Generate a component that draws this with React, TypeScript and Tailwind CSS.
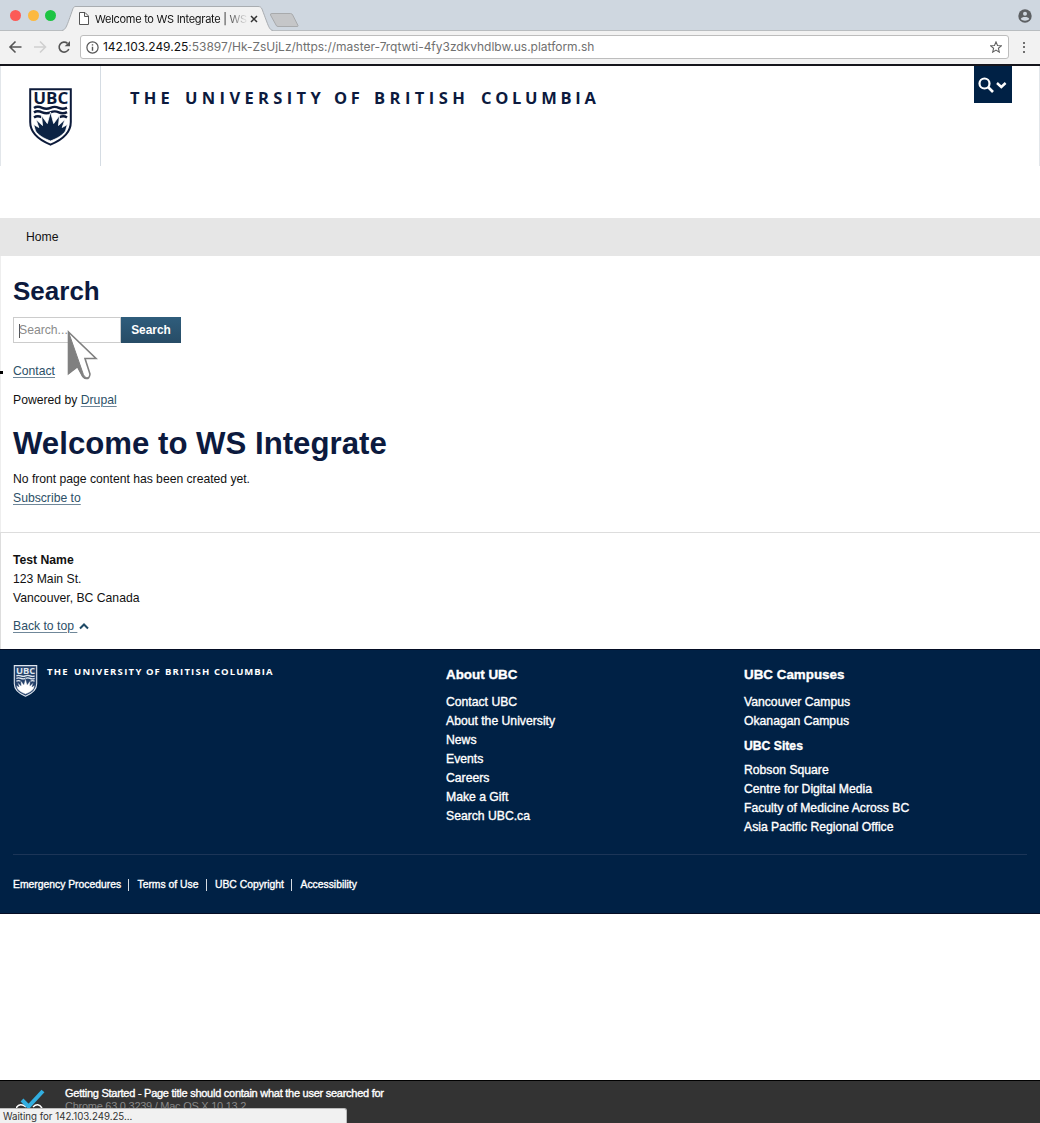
import React from "react";

function Crest({ className, line, fill, rays }: { className: string; line: string; fill: string; rays: string }) {
  return (
    <svg className={className} viewBox="0 0 43 58" fill="none">
      <path d="M1.200 1.200H41.800V34C41.800 45 34 51.500 21.500 56.600C9 51.500 1.200 45 1.200 34Z" fill={fill} stroke={line} strokeWidth="2" />
      <text x="4.200" y="15.800" fontFamily="'Open Sans', sans-serif" fontWeight="700" fontSize="16.500" textLength="35" lengthAdjust="spacingAndGlyphs" fill={line}>
        UBC
      </text>
      <g stroke={line} strokeWidth="2.400">
        <path d="M5 20c3-2.200 5-1.600 8.200-.2s5.200 1.400 8.300 0s5.300-1.400 8.300 0s5.200 1.400 8.200-.2" />
        <path d="M5 24.500c3-2.200 5-1.600 8.200-.2s5.200 1.400 8.300 0s5.300-1.400 8.300 0s5.200 1.400 8.200-.2" />
        <path d="M5 29.500c2.500-1.700 4.500-1.600 7.500-.4M30.500 29.100c3-1.200 5-1.300 7.500.4" />
      </g>
      <path
        d="M6.500 43L4.600 36.500L9.800 39.500L7 31.500L13.500 37.500L12.500 27.500L18.300 35.500L21.500 24L24.700 35.500L30.500 27.500L29.500 37.500L36 31.500L33.200 39.500L38.400 36.500L36.500 43C33.500 47.500 28 50.500 21.500 53C15 50.500 9.500 47.500 6.500 43Z"
        fill={rays}
        stroke={fill}
        strokeWidth=".8"
      />
    </svg>
  );
}

function BrowserChrome() {
  return (
    <header className="h-[66px] border-b-2 border-[#15151c] bg-[#f2f2f2] font-[Inter,sans-serif]">
      <div className="relative flex h-[31px] border-b border-[#b9bdc0] bg-[#cfd7e0]">
        <svg className="absolute left-0 top-0 h-[32px] w-[310px]" viewBox="0 0 310 32" fill="none">
          <path d="M62 31C66 29.500 66.500 27 73 8.500C74 6.700 74.500 6.500 76 6.500H258C260 6.500 261 7 262 9C269 27.500 269 29.500 273 31V32H62Z" fill="#f2f2f2" />
          <path d="M62 30.500C66 29.500 66.500 27 73 8.500C74 6.700 74.500 6.500 76 6.500H258C260 6.500 261 7 262 9C269 27.500 269 29.500 273 30.500" stroke="#a9adb1" />
          <path d="M272 13.500H290.500Q292 13.500 292.700 15L298 25.500Q298.300 26.500 297 26.500H278Q276.500 26.500 276 25L270.500 15Q270 13.500 272 13.500Z" fill="#c5c6c8" stroke="#a8aaac" />
        </svg>
        <div className="relative flex h-[31px] w-full items-center">
          <i className="ml-[10px] size-[11px] rounded-full bg-[#fc5b57]" />
          <i className="ml-[6.500px] size-[11px] rounded-full bg-[#fcb93f]" />
          <i className="ml-[6.500px] size-[11px] rounded-full bg-[#1dc443]" />
          <svg className="ml-[23px] mt-[6px] h-[13px] w-[10px] shrink-0" viewBox="0 0 10 13" fill="#fff" stroke="#555" strokeWidth="1">
            <path d="M.5.500H6L9.500 4V12.500H.500ZM5.500.500V4.500H9.500" />
          </svg>
          <p className="ml-[6px] mt-[7px] w-[153px] whitespace-nowrap bg-[linear-gradient(90deg,#111_84%,#d8d8d8_98%)] bg-clip-text text-[11px] leading-[16px] tracking-[-0.28px] text-transparent">
            Welcome to WS Integrate | WS
          </p>
          <svg className="ml-[2px] mt-[7px] size-[8px] shrink-0" viewBox="0 0 8 8" stroke="#333" strokeWidth="1.500">
            <path d="M1 1L7 7M7 1L1 7" />
          </svg>
          <svg className="ml-auto mr-[8px] size-[14px]" viewBox="0 0 14 14">
            <circle cx="7" cy="7" r="6.700" fill="#5d6063" />
            <circle cx="7" cy="4.700" r="2" fill="#cfd7e0" />
            <path d="M2.800 10C3.500 7.400 10.500 7.400 11.200 10C9.500 12.200 4.500 12.200 2.800 10Z" fill="#cfd7e0" />
          </svg>
        </div>
      </div>
      <div className="flex h-[32px] items-center">
        <svg className="ml-[8px] h-[14px] w-[64px] shrink-0" viewBox="0 0 64 14" fill="none" strokeWidth="1.600">
          <path d="M13.500 7H2M7.500 1.500L2 7L7.500 12.500" stroke="#555" />
          <path d="M26 7H37.500M32 1.500L37.500 7L32 12.500" stroke="#d0d0d0" />
          <path d="M60.800 9A5 5 0 1 1 59.500 3.400" stroke="#555" />
          <path d="M62 1V6.300H56.700Z" fill="#555" />
        </svg>
        <div className="ml-[8px] flex h-[24px] w-[929px] items-center rounded-[3px] border border-[#bdbdbd] bg-white">
          <svg className="ml-[5px] size-[13px] shrink-0" viewBox="0 0 13 13" fill="none" stroke="#555" strokeWidth="1.200">
            <circle cx="6.500" cy="6.500" r="5.600" />
            <path d="M6.500 5.700V9.700M6.500 3.200V4.600" strokeWidth="1.400" />
          </svg>
          <p className="ml-[4px] whitespace-nowrap text-[12px] leading-[16px] tracking-[-0.018px] text-[#707070]">
            <span className="text-[#111]">142.103.249.25</span>:53897/Hk-ZsUjLz/https://master-7rqtwti-4fy3zdkvhdlbw.us.platform.sh
          </p>
          <svg className="ml-auto mr-[6px] size-[12px]" viewBox="0 0 12 12" fill="none" stroke="#606060" strokeWidth="1.100">
            <path d="M6 .9L7.500 4.500L11.300 4.800L8.400 7.300L9.300 11.100L6 9.100L2.700 11.100L3.600 7.300L.7 4.800L4.500 4.500Z" />
          </svg>
        </div>
        <div className="ml-[14px] flex flex-col gap-[2.500px]">
          <i className="size-[2px] rounded-full bg-[#444]" />
          <i className="size-[2px] rounded-full bg-[#444]" />
          <i className="size-[2px] rounded-full bg-[#444]" />
        </div>
      </div>
    </header>
  );
}

const linkStyle = "text-[#2d5067] underline decoration-[#6f8799] decoration-1 underline-offset-2";

function FooterLinks({ items }: { items: string[] }) {
  return (
    <ul>
      {items.map((t) => (
        <li key={t} className="h-[19px] whitespace-nowrap leading-[19px]">{t}</li>
      ))}
    </ul>
  );
}

export default function App() {
  return (
    <div className="flex h-[1123px] w-[1040px] flex-col overflow-hidden bg-white font-['Liberation_Sans',Arial,sans-serif] text-[12.2px] leading-[19px] text-[#111]">
      <BrowserChrome />
      <div className="flex h-[100px] border-x border-[#e2e6ea]">
        <div className="w-[100px] border-r border-[#d5dce3] pl-[28px] pt-[22px]">
          <Crest className="h-[58px] w-[43px]" line="#0c1a3a" fill="#fff" rays="#0c2344" />
        </div>
        <div className="flex pl-[29px] pt-[21px] font-['Open_Sans',sans-serif] text-[16.5px] font-bold leading-[22px] text-[#0c1a3e]">
          <span className="w-[55px] tracking-[4.100px]">THE</span>
          <span className="w-[149px] tracking-[4.350px]">UNIVERSITY</span>
          <span className="w-[40px] tracking-[3.500px]">OF</span>
          <span className="w-[107px] tracking-[4.450px]">BRITISH</span>
          <span className="tracking-[3.700px]">COLUMBIA</span>
        </div>
        <div className="ml-auto mr-[27px] flex h-[37px] w-[38px] items-center bg-[#002145] pl-[4px]">
          <svg className="h-[16px] w-[29px]" viewBox="0 0 29 16" fill="none" stroke="#fff" strokeWidth="2.200">
            <circle cx="6.500" cy="6.500" r="5" />
            <path d="M10 10L15 15" strokeWidth="2.600" />
            <path d="M19 6L23.300 10L27.600 6" strokeWidth="2.400" />
          </svg>
        </div>
      </div>
      <nav className="mt-[52px] flex h-[38px] items-center bg-[#e6e6e6] pl-[26px]">Home</nav>
      <main className="relative h-[276px] border-l border-[#eee] pl-[12px]">
        <h2 className="pt-[19px] text-[26px] font-bold leading-[32px] text-[#0c1a3e]">Search</h2>
        <div className="mt-[10px] flex h-[26px]">
          <div className="flex w-[108px] items-center border border-[#ccc] pl-[5px] pt-px text-[#8b8b8b]">
            <i className="-mr-px h-[14px] w-px bg-[#555]" />Search...
          </div>
          <button className="w-[60px] bg-gradient-to-b from-[#2f5d7c] to-[#274c66] text-[11.900px] font-bold text-white">Search</button>
        </div>
        <i className="absolute -left-px top-[115px] h-[3px] w-[3px] bg-black" />
        <p className="mt-[19px]"><a className={linkStyle}>Contact</a></p>
        <p className="mt-[10px]">Powered by <a className={linkStyle}>Drupal</a></p>
        <h1 className="mt-[14px] text-[31.200px] font-bold leading-[40px] text-[#0c1a3e]">Welcome to WS Integrate</h1>
        <p className="mt-[6px] tracking-[-0.02px]">No front page content has been created yet.</p>
        <p><a className={linkStyle}>Subscribe to</a></p>
        <svg className="absolute left-[66px] top-[74px] h-[52px] w-[34px]" viewBox="0 0 34 52">
          <path d="M1.500 2L29 28.500L18 28.500L23 44Q22.500 49 19 48.500Q16 48 14.500 44L10.500 36.500L1.500 43.500Z" fill="#fff" stroke="#808080" strokeWidth="1.600" />
          <path d="M1.500 2L15.500 42Q17 48 21 48Q16.500 50 14.500 44L10.500 36.500L1.500 43.500Z" fill="#808080" stroke="#808080" />
        </svg>
      </main>
      <section className="h-[117px] border-l border-t border-[#ddd] pl-[12px] pt-[18px]">
        <p className="font-bold">Test Name</p>
        <p>123 Main St.</p>
        <p>Vancouver, BC Canada</p>
        <p className="mt-[9px] flex items-center">
          <a className={`${linkStyle} whitespace-pre`}>{"Back to top "}</a>
          <svg className="ml-[2px] h-[7px] w-[10px]" viewBox="0 0 10 7" fill="none" stroke="#1f4a66" strokeWidth="2"><path d="M1 5.500L5 1.500L9 5.500" /></svg>
        </p>
      </section>
      <footer className="h-[265px] border-y border-[#050d24] bg-[#002145] px-[13px] text-white [-webkit-text-stroke:0.350px_white]">
        <div className="flex h-[205px] border-b border-[#1c3557]">
          <div className="flex w-[433px] pt-[15px]">
            <Crest className="h-[32px] w-[25px]" line="#dfe6ee" fill="#24416a" rays="#fff" />
            <div className="flex pl-[9px] font-['Open_Sans',sans-serif] text-[9.500px] font-bold leading-[13px] [-webkit-text-stroke:0px]">
              <span className="w-[27px] tracking-[1.200px]">THE</span>
              <span className="w-[72px] tracking-[1.300px]">UNIVERSITY</span>
              <span className="w-[19px] tracking-[1px]">OF</span>
              <span className="w-[49px] tracking-[1.200px]">BRITISH</span>
              <span className="tracking-[1.050px]">COLUMBIA</span>
            </div>
          </div>
          <div className="w-[298px] pt-[15px]">
            <h3 className="mb-[9px] text-[13.400px] font-bold">About UBC</h3>
            <FooterLinks items={["Contact UBC", "About the University", "News", "Events", "Careers", "Make a Gift", "Search UBC.ca"]} />
          </div>
          <div className="pt-[15px]">
            <h3 className="mb-[9px] text-[13.400px] font-bold">UBC Campuses</h3>
            <FooterLinks items={["Vancouver Campus", "Okanagan Campus"]} />
            <h4 className="mb-[5px] mt-[6px] font-bold">UBC Sites</h4>
            <FooterLinks items={["Robson Square", "Centre for Digital Media", "Faculty of Medicine Across BC", "Asia Pacific Regional Office"]} />
          </div>
        </div>
        <div className="flex items-center whitespace-nowrap pt-[20px] text-[10.350px]">
          <span className="w-[115px]">Emergency Procedures</span>
          <i className="mr-[8.500px] h-[12px] w-px bg-[#d5dbe2]" />
          <span className="w-[68px]">Terms of Use</span>
          <i className="mr-[8.500px] h-[12px] w-px bg-[#d5dbe2]" />
          <span className="w-[76px]">UBC Copyright</span>
          <i className="mr-[8.500px] h-[12px] w-px bg-[#d5dbe2]" />
          <span>Accessibility</span>
        </div>
      </footer>
      <div className="relative mt-auto h-[43px] border-t border-black bg-[#333]">
        <svg className="absolute left-[16px] top-[8px] h-[26px] w-[30px]" viewBox="0 0 30 26" fill="none">
          <path d="M0 19Q4 13 10 18M17 18Q22 13 26 19" stroke="#fff" strokeWidth="1.500" />
          <path d="M6 11L12.500 17.500L27 2" stroke="#32aee0" strokeWidth="4" />
        </svg>
        <div className="pl-[65px] pt-[6px] text-[11px] leading-[13px] tracking-[-0.260px]">
          <p className="text-white [-webkit-text-stroke:0.350px_white]">Getting Started - Page title should contain what the user searched for</p>
          <p className="text-[#888]">Chrome 63.0.3239 / Mac OS X 10.13.2</p>
        </div>
        <div className="absolute bottom-0 left-0 h-[15px] w-[347px] rounded-tr-[3px] border-r border-t border-[#bbb] bg-[#f1f1f1] pl-[3px] font-[Inter,sans-serif] text-[9.700px] leading-[15px] text-[#333]">
          Waiting for 142.103.249.25...
        </div>
      </div>
    </div>
  );
}
